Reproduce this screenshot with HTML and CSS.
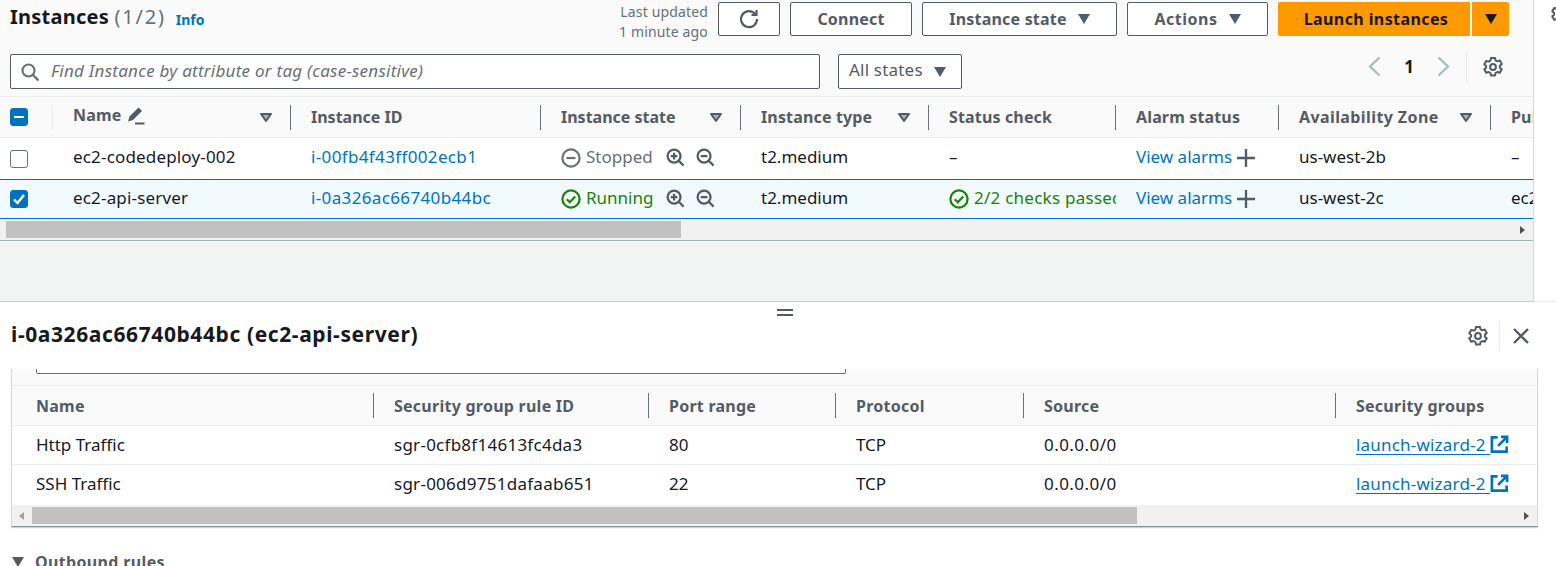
FILE: index.html
```html
<!DOCTYPE html>
<html lang="en">
<head>
  <meta charset="UTF-8" />
  <title>Instances</title>
  <link rel="stylesheet" href="styles.css">
</head>
<body>
  <svg class="icon-defs" width="0" height="0">
    <defs>
      <symbol id="gear" viewBox="1 1 18 18">
        <path fill="none" stroke="currentColor" stroke-width="1.8" stroke-linejoin="round" d="M8.2 1.8h3.6l.5 2.2 1.6.9 2.2-.7 1.8 3.1-1.7 1.5v1.800l1.700 1.500-1.800 3.100-2.200-.7-1.600.9-.5 2.200H8.200l-.5-2.200-1.600-.9-2.200.7-1.800-3.100 1.700-1.500V9.100L2.100 7.600l1.800-3.100 2.200.7 1.600-.9z"/>
        <circle cx="10" cy="10" r="2.600" fill="none" stroke="currentColor" stroke-width="1.800"/>
      </symbol>
      <symbol id="zoom-in" viewBox="0 0 20 20">
        <circle cx="8.500" cy="8.500" r="6.800" fill="none" stroke="currentColor" stroke-width="2.400"/>
        <path fill="none" stroke="currentColor" stroke-width="2.400" d="M13.200 13.200L18.500 18.500M5 8.500h7M8.500 5v7"/>
      </symbol>
      <symbol id="zoom-out" viewBox="0 0 20 20">
        <circle cx="8.500" cy="8.500" r="6.800" fill="none" stroke="currentColor" stroke-width="2.400"/>
        <path fill="none" stroke="currentColor" stroke-width="2.400" d="M13.200 13.200L18.500 18.500M5 8.500h7"/>
      </symbol>
      <symbol id="ok" viewBox="0 0 20 20">
        <circle cx="10" cy="10" r="8.600" fill="none" stroke="currentColor" stroke-width="2.200"/>
        <path fill="none" stroke="currentColor" stroke-width="2.200" d="M5.800 10.200l3 3 5.400-5.600"/>
      </symbol>
      <symbol id="stopped" viewBox="0 0 20 20">
        <circle cx="10" cy="10" r="8.600" fill="none" stroke="currentColor" stroke-width="2.200"/>
        <path fill="none" stroke="currentColor" stroke-width="2.200" d="M5.500 10h9"/>
      </symbol>
      <symbol id="plus" viewBox="0 0 20 20">
        <path fill="none" stroke="currentColor" stroke-width="2.600" d="M0 10h20M10 0v20"/>
      </symbol>
      <symbol id="external" viewBox="0 0 20 20">
        <path fill="none" stroke="currentColor" stroke-width="2.800" d="M8 2.500H2v15h15.500V12M11.500 2h6.500v6.500M18 2L8.500 11.500"/>
      </symbol>
      <symbol id="sort" viewBox="0 0 14 11">
        <path fill="#aab0b5" stroke="#545b64" stroke-width="2" stroke-linejoin="round" d="M2 2h10L7 9z"/>
      </symbol>
    </defs>
  </svg>

  <div class="page">
    <div class="top-pane">
      <div class="card">
        <div class="toolbar">
          <h1 class="title">Instances <span class="count">(1/2)</span></h1>
          <a class="info">Info</a>
          <div class="updated">Last updated<br>1 minute ago</div>
          <button class="btn btn-refresh">
            <svg width="20" height="20" viewBox="0 0 20 20"><path fill="none" stroke="currentColor" stroke-width="2.200" d="M16.500 5.500A8 8 0 1 0 18 10"/><path fill="none" stroke="currentColor" stroke-width="2.200" d="M17.500 1v5h-5"/></svg>
          </button>
          <button class="btn btn-connect">Connect</button>
          <button class="btn btn-state">Instance state <i class="caret"></i></button>
          <button class="btn btn-actions">Actions <i class="caret"></i></button>
          <button class="btn-launch">Launch instances</button>
          <button class="btn-launch-caret"><i class="caret caret-dark"></i></button>
        </div>

        <div class="filter-row">
          <div class="search">
            <svg width="18" height="18" viewBox="0 0 18 18"><circle cx="7.500" cy="7.500" r="6" fill="none" stroke="currentColor" stroke-width="2.200"/><path stroke="currentColor" stroke-width="2.400" d="M12 12L17.500 17.500"/></svg>
            <span>Find Instance by attribute or tag (case-sensitive)</span>
          </div>
          <div class="states">All states <i class="caret"></i></div>
          <div class="pager">
            <svg width="13" height="21" viewBox="0 0 13 21"><path fill="none" stroke="currentColor" stroke-width="2.200" d="M11.500 1.500L2 10.500l9.500 9"/></svg>
            <b>1</b>
            <svg width="13" height="21" viewBox="0 0 13 21"><path fill="none" stroke="currentColor" stroke-width="2.200" d="M1.500 1.500l9.500 9-9.500 9"/></svg>
          </div>
          <div class="pager-tools"><svg width="20" height="20"><use href="#gear"/></svg></div>
        </div>

        <div class="grid grid-head">
          <div class="cell cell-check"><span class="check check-mixed"></span></div>
          <div class="cell">
            <span class="name-head">Name
              <svg width="19" height="19" viewBox="0 0 19 19"><path fill="currentColor" d="M12.500 1.500l3.500 3.500-9 9-5 1.500 1.500-5z"/><path stroke="currentColor" stroke-width="2" d="M9 17.500h9.500"/></svg>
            </span>
            <svg class="sort" width="14" height="11"><use href="#sort"/></svg>
          </div>
          <div class="cell head-tight">Instance ID</div>
          <div class="cell head-tight">Instance state <svg class="sort" width="14" height="11"><use href="#sort"/></svg></div>
          <div class="cell">Instance type <svg class="sort" width="14" height="11"><use href="#sort"/></svg></div>
          <div class="cell">Status check</div>
          <div class="cell">Alarm status</div>
          <div class="cell head-wide">Availability Zone <svg class="sort" width="14" height="11"><use href="#sort"/></svg></div>
          <div class="cell cell-last">Public</div>
        </div>

        <div class="grid grid-row">
          <div class="cell cell-check"><span class="check"></span></div>
          <div class="cell name-text">ec2-codedeploy-002</div>
          <div class="cell"><a class="link id-text">i-00fb4f43ff002ecb1</a></div>
          <div class="cell">
            <span class="state state-stopped"><svg width="20" height="20"><use href="#stopped"/></svg>Stopped</span>
            <span class="zoom-icons"><svg width="19" height="19"><use href="#zoom-in"/></svg><svg width="19" height="19"><use href="#zoom-out"/></svg></span>
          </div>
          <div class="cell">t2.medium</div>
          <div class="cell">–</div>
          <div class="cell"><a class="link">View alarms</a><svg class="plus" width="18" height="18"><use href="#plus"/></svg></div>
          <div class="cell">us-west-2b</div>
          <div class="cell cell-last">–</div>
        </div>

        <div class="grid grid-row grid-selected">
          <div class="cell cell-check"><span class="check check-on">
            <svg width="14" height="14" viewBox="0 0 14 14"><path fill="none" stroke="#fff" stroke-width="2.400" d="M2 7.500l3.500 3.500L12 3"/></svg>
          </span></div>
          <div class="cell name-text">ec2-api-server</div>
          <div class="cell"><a class="link id-text">i-0a326ac66740b44bc</a></div>
          <div class="cell">
            <span class="state state-running"><svg width="20" height="20"><use href="#ok"/></svg>Running</span>
            <span class="zoom-icons"><svg width="19" height="19"><use href="#zoom-in"/></svg><svg width="19" height="19"><use href="#zoom-out"/></svg></span>
          </div>
          <div class="cell">t2.medium</div>
          <div class="cell"><span class="state state-running status-text"><svg width="20" height="20"><use href="#ok"/></svg>2/2 checks passed</span></div>
          <div class="cell"><a class="link">View alarms</a><svg class="plus" width="18" height="18"><use href="#plus"/></svg></div>
          <div class="cell">us-west-2c</div>
          <div class="cell cell-last">ec2-54</div>
        </div>

        <div class="scrollbar scrollbar-top">
          <span class="thumb"></span>
          <i class="arrow-right"></i>
        </div>
      </div>
    </div>

    <div class="side-rail"><svg width="20" height="20"><use href="#gear"/></svg></div>

    <div class="bottom-pane">
      <div class="handle"></div>
      <div class="detail-head">
        <h2 class="detail-title">i-0a326ac66740b44bc (ec2-api-server)</h2>
        <div class="detail-tools">
          <svg class="detail-gear" width="20" height="20"><use href="#gear"/></svg>
          <svg class="detail-close" width="16" height="16" viewBox="0 0 16 16"><path stroke="currentColor" stroke-width="2.400" d="M1 1l14 14M15 1L1 15"/></svg>
        </div>
      </div>

      <div class="detail-body">
        <div class="rules-card">
          <div class="rules-filter"><span class="input-end"></span></div>
          <div class="rules rules-head">
            <div class="rule-cell">Name</div>
            <div class="rule-cell">Security group rule ID</div>
            <div class="rule-cell">Port range</div>
            <div class="rule-cell">Protocol</div>
            <div class="rule-cell">Source</div>
            <div class="rule-cell">Security groups</div>
          </div>
          <div class="rules rules-row">
            <div class="rule-cell">Http Traffic</div>
            <div class="rule-cell sgr-text">sgr-0cfb8f14613fc4da3</div>
            <div class="rule-cell">80</div>
            <div class="rule-cell">TCP</div>
            <div class="rule-cell cidr-text">0.0.0.0/0</div>
            <div class="rule-cell"><a class="ext-link">launch-wizard-2 </a><svg class="ext" width="19" height="19"><use href="#external"/></svg></div>
          </div>
          <div class="rules rules-row rules-row-last">
            <div class="rule-cell">SSH Traffic</div>
            <div class="rule-cell sgr-text">sgr-006d9751dafaab651</div>
            <div class="rule-cell">22</div>
            <div class="rule-cell">TCP</div>
            <div class="rule-cell cidr-text">0.0.0.0/0</div>
            <div class="rule-cell"><a class="ext-link">launch-wizard-2 </a><svg class="ext" width="19" height="19"><use href="#external"/></svg></div>
          </div>
          <div class="scrollbar scrollbar-bottom">
            <i class="arrow-left"></i>
            <span class="thumb"></span>
            <i class="arrow-right"></i>
          </div>
        </div>
        <div class="outbound"><i class="caret"></i>Outbound rules</div>
      </div>
    </div>
  </div>
</body>
</html>
```

FILE: styles.css
```css
* {
  box-sizing: border-box;
}

html, body {
  margin: 0;
  height: 566px;
  overflow: hidden;
}

body {
  font-family: "Noto Sans", sans-serif;
  font-size: 16px;
  color: #16191f;
  background: #fff;
}

.icon-defs {
  position: absolute;
}

a {
  text-decoration: none;
}

.page {
  display: grid;
  grid-template-columns: 1534px 22px;
  grid-template-rows: 302px 264px;
  width: 1556px;
  height: 566px;
}

/* top pane */
.top-pane {
  background: #f2f3f3;
  border-right: 1px solid #d5dbdb;
  border-bottom: 1px solid #c8cfcf;
  overflow: hidden;
}

.card {
  background: #fafafa;
  height: 241px;
  border-bottom: 1px solid #aab7b8;
}

.side-rail {
  background: #fff;
  border-bottom: 1px solid #eaeded;
  padding: 4px 0 0 17px;
  color: #545b64;
  overflow: hidden;
}

.toolbar {
  display: flex;
  align-items: flex-start;
  height: 54px;
  padding: 2px 0 0 10px;
}

.title {
  margin: 0;
  font-size: 20px;
  line-height: 30px;
  font-weight: 700;
  letter-spacing: 0.25px;
  white-space: nowrap;
}

.count {
  font-weight: 400;
  color: #687078;
  letter-spacing: 1.8px;
}

.info {
  margin: 8px 0 0 10px;
  font-size: 14px;
  line-height: 20px;
  font-weight: 700;
  color: #0073bb;
}

.updated {
  margin-left: auto;
  margin-right: 10px;
  font-size: 14px;
  line-height: 20px;
  letter-spacing: 0.15px;
  text-align: right;
  color: #687078;
}

.btn {
  display: flex;
  align-items: center;
  justify-content: center;
  gap: 11px;
  height: 34px;
  padding: 0;
  margin-right: 10px;
  font: 700 16px "Noto Sans", sans-serif;
  letter-spacing: 0.2px;
  color: #545b64;
  background: #fff;
  border: 1px solid #545b64;
  border-radius: 2px;
}

.btn-refresh {
  width: 62px;
}

.btn-connect {
  width: 122px;
}

.btn-state {
  width: 195px;
}

.btn-actions {
  width: 141px;
  letter-spacing: 0.5px;
}

.btn-launch,
.btn-launch-caret {
  height: 34px;
  padding: 0;
  font: 700 16px "Noto Sans", sans-serif;
  letter-spacing: 0.4px;
  color: #16191f;
  background: #ff9900;
  border: 0;
}

.btn-launch {
  width: 192px;
  padding-left: 4px;
  border-radius: 2px 0 0 2px;
}

.btn-launch-caret {
  display: flex;
  align-items: center;
  justify-content: center;
  width: 37px;
  margin-left: 2px;
  margin-right: 24px;
  border-radius: 0 2px 2px 0;
}

.caret {
  display: inline-block;
  width: 0;
  height: 0;
  border-left: 6.5px solid transparent;
  border-right: 6.5px solid transparent;
  border-top: 10px solid #545b64;
}

.caret-dark {
  border-top-color: #16191f;
}

.filter-row {
  display: flex;
  align-items: flex-start;
  height: 43px;
  padding-left: 10px;
  border-bottom: 1px solid #eaeded;
  font-size: 17px;
}

.search {
  display: flex;
  align-items: center;
  gap: 12px;
  width: 810px;
  height: 35px;
  padding-left: 10px;
  background: #fff;
  border: 1px solid #545b64;
  border-radius: 2px;
  color: #687078;
  font-style: italic;
  letter-spacing: 0.25px;
}

.search span {
  margin-top: -2px;
}

.states {
  display: flex;
  align-items: center;
  gap: 11px;
  width: 124px;
  height: 35px;
  margin-left: 18px;
  padding-left: 10px;
  padding-bottom: 5px;
  background: #fff;
  border: 1px solid #545b64;
  border-radius: 2px;
  color: #545b64;
  letter-spacing: 0.2px;
}

.states .caret {
  margin-top: 5px;
}

.pager {
  display: flex;
  align-items: center;
  justify-content: space-between;
  width: 82px;
  height: 34px;
  margin: -5px 0 0 406px;
  color: #aab7b8;
}

.pager b {
  color: #16191f;
}

.pager-tools {
  display: flex;
  align-items: center;
  height: 33px;
  margin: -4px 0 0 16px;
  padding-left: 16px;
  border-left: 1px solid #eaeded;
  color: #545b64;
}

.grid {
  display: grid;
  grid-template-columns: 53px 238px 250px 200px 188px 187px 163px 212px 100px;
  width: 1533px;
  overflow: hidden;
}

.cell {
  display: flex;
  align-items: center;
  min-width: 0;
  padding-left: 20px;
  white-space: nowrap;
  overflow: hidden;
}

.grid .cell-check {
  padding-left: 10px;
}

.grid-head {
  height: 41px;
  border-bottom: 1px solid #eaeded;
  font-weight: 700;
  letter-spacing: 0.15px;
  color: #545b64;
}

.grid-head .cell {
  position: relative;
  justify-content: space-between;
  padding-right: 18px;
}

.grid-head .cell::after {
  content: "";
  position: absolute;
  right: 0;
  top: 8px;
  bottom: 7px;
  width: 1px;
  background: #687078;
}

.grid-head .cell-check::after {
  background: #eaeded;
}

.grid-head .cell-last::after {
  display: none;
}

.grid-head .head-tight {
  letter-spacing: 0;
}

.grid-head .head-wide {
  letter-spacing: 0.4px;
}

.name-head {
  display: flex;
  align-items: center;
  gap: 5px;
  margin-top: -4px;
}

.sort {
  flex: none;
  margin-left: 4px;
}

.grid-row {
  height: 42px;
  font-size: 17px;
  background: #fff;
  border-bottom: 1px solid #eaeded;
}

.grid-row .cell {
  padding-bottom: 5px;
}

.grid-selected {
  height: 40px;
  background: #f1faff;
  border-top: 1px solid #0073bb;
  border-bottom: 1px solid #0073bb;
  margin-top: -1px;
}

.grid-selected .cell {
  padding-bottom: 4px;
}

.grid-row .cell-check {
  padding-bottom: 0;
}

.name-text {
  letter-spacing: 0.17px;
}

.check {
  display: flex;
  align-items: center;
  justify-content: center;
  width: 18px;
  height: 18px;
  background: #fff;
  border: 1px solid #687078;
  border-radius: 3px;
}

.check-on,
.check-mixed {
  background: #0073bb;
  border-color: #0073bb;
}

.check-mixed::before {
  content: "";
  width: 10px;
  height: 2px;
  background: #fff;
}

.link {
  color: #0073bb;
}

.id-text {
  letter-spacing: 0.36px;
}

.state {
  display: flex;
  align-items: center;
  gap: 5px;
}

.state svg {
  flex: none;
  margin-top: 3px;
}

.state-stopped {
  color: #687078;
}

.state-running {
  color: #1d8102;
}

.status-text {
  letter-spacing: 0.25px;
}

.zoom-icons {
  display: flex;
  gap: 11px;
  margin: 2px 0 0 13px;
  color: #545b64;
}

.plus {
  flex: none;
  margin: 3px 0 0 5px;
  color: #545b64;
}

.scrollbar {
  display: flex;
  align-items: center;
  background: #f1f1f1;
  height: 21px;
}

.thumb {
  height: 17px;
  background: #c1c1c1;
}

.scrollbar-top {
  padding-left: 6px;
}

.scrollbar-top .thumb {
  width: 675px;
}

.arrow-right,
.arrow-left {
  width: 0;
  height: 0;
  border-top: 4.5px solid transparent;
  border-bottom: 4.5px solid transparent;
}

.arrow-right {
  margin-left: auto;
  margin-right: 8px;
  border-left: 5px solid #505050;
}

.arrow-left {
  margin: 0 8px 0 7px;
  border-right: 5px solid #a3a3a3;
}

/* bottom pane */
.bottom-pane {
  grid-column: 1 / 3;
  position: relative;
  background: #fff;
  overflow: hidden;
}

.handle {
  position: absolute;
  left: 777px;
  top: 7px;
  width: 16px;
  height: 7px;
  border-top: 2px solid #545b64;
  border-bottom: 2px solid #545b64;
}

.detail-head {
  display: flex;
  align-items: center;
  justify-content: space-between;
  height: 67px;
  padding: 0 27px 0 11px;
}

.detail-title {
  margin: -3px 0 0;
  font-size: 21px;
  font-weight: 700;
  letter-spacing: 0.6px;
}

.detail-tools {
  display: flex;
  align-items: center;
  height: 30px;
  color: #545b64;
}

.detail-gear {
  margin-right: 11px;
}

.detail-close {
  box-sizing: content-box;
  padding: 7px 0 7px 13px;
  border-left: 1px solid #eaeded;
}

.detail-body {
  padding: 0 18px 0 11px;
}

.rules-card {
  background: #fff;
  border-right: 1px solid #d5dbdb;
  border-bottom: 1px solid #879596;
  border-left: 1px solid #d5dbdb;
  box-shadow: 0 1px 1px rgba(0, 33, 43, 0.2);
  height: 158px;
}

.rules-filter {
  height: 17px;
  padding-left: 24px;
  background: #fafafa;
  border-bottom: 1px solid #eaeded;
}

.input-end {
  display: block;
  width: 810px;
  height: 5px;
  background: #fff;
  border: 1px solid #687078;
  border-top: 0;
  border-radius: 0 0 2px 2px;
}

.rules {
  display: grid;
  grid-template-columns: 362px 275px 187px 188px 312px 200px;
}

.rules-head {
  height: 40px;
  background: #fafafa;
  border-bottom: 1px solid #eaeded;
  font-weight: 700;
  letter-spacing: 0.25px;
  color: #545b64;
}

.rules-row {
  height: 39px;
  padding-bottom: 2px;
  font-size: 17px;
  border-bottom: 1px solid #eaeded;
}

.rules-row-last {
  height: 40px;
  padding-bottom: 3px;
  border-bottom: 0;
}

.rule-cell {
  display: flex;
  align-items: center;
  padding-left: 20px;
  white-space: nowrap;
}

.rule-cell:first-child {
  padding-left: 24px;
}

.rules-head .rule-cell {
  position: relative;
}

.rules-head .rule-cell:not(:last-child)::after {
  content: "";
  position: absolute;
  right: 0;
  top: 7px;
  bottom: 7px;
  width: 1px;
  background: #687078;
}

.sgr-text {
  letter-spacing: 0.26px;
}

.cidr-text {
  letter-spacing: 0.45px;
}

.ext-link {
  color: #0073bb;
  text-decoration: underline;
  text-underline-offset: 3px;
  letter-spacing: 0.2px;
  white-space: pre;
}

.ext {
  color: #0073bb;
}

.scrollbar-bottom .thumb {
  width: 1105px;
}

.outbound {
  display: flex;
  align-items: center;
  gap: 11px;
  margin-top: 24px;
  margin-left: 1px;
  font-weight: 700;
  letter-spacing: 0.35px;
  color: #545b64;
  white-space: nowrap;
}
```
